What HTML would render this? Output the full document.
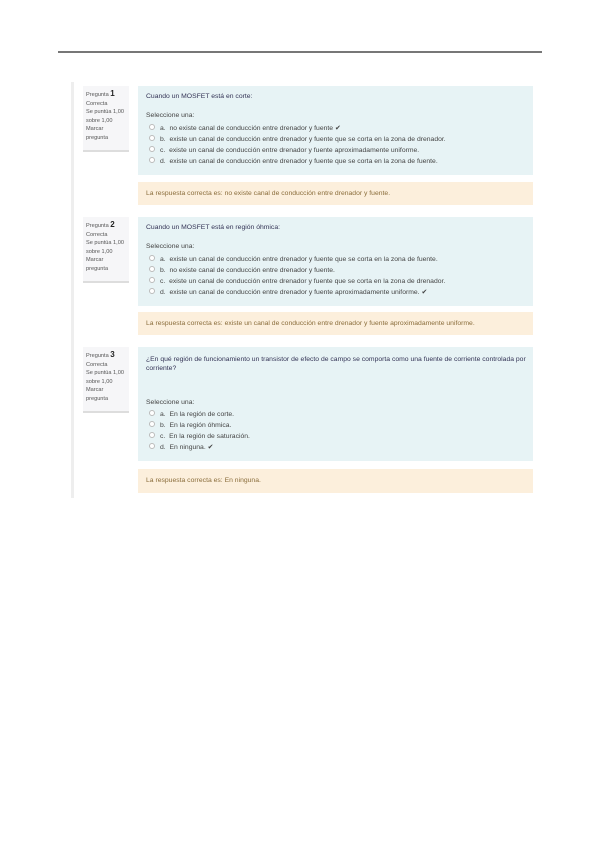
<!DOCTYPE html>
<html><head><meta charset="utf-8"><style>
body{margin:0;width:600px;height:848px;background:#fff;position:relative;font-family:"Liberation Sans",sans-serif;color:#444;overflow:hidden}
.a{position:absolute;white-space:nowrap;font-size:6.8px;line-height:8px}
.rule{position:absolute;left:58px;top:51px;width:484px;height:2px;background:#777}
.vl{position:absolute;left:71px;top:82px;width:3px;height:416px;background:#eee}
.info{position:absolute;left:83px;width:46px;background:#f6f6f8;border-bottom:2px solid #ddd}
.box{position:absolute;left:138px;width:395px;background:#e7f3f5}
.fb{position:absolute;left:138px;width:395px;background:#fcefdc}
.r{display:inline-block;width:4px;height:4px;border:1px solid #bbb;border-radius:50%;margin-right:5px;vertical-align:0px;background:#fff}
.in{font-size:5.6px;line-height:8.5px;color:#555;padding:4px 3px;white-space:normal}
</style></head><body>
<div class="rule"></div><div class="vl"></div>

<div class="info" style="top:86px;height:64px"><div class="in">Pregunta <b style="font-size:8px;color:#222">1</b><br>Correcta<br>Se puntúa 1,00 sobre 1,00<br>Marcar pregunta</div></div>
<div class="box" style="top:86px;height:89px"></div>
<div class="a" style="left:146px;top:93px;color:#335">Cuando un MOSFET está en corte:</div>
<div class="a" style="left:146px;top:112px">Seleccione una:</div>
<div class="a" style="left:149px;top:124px"><span class="r"></span>a. &nbsp;no existe canal de conducción entre drenador y fuente ✔</div>
<div class="a" style="left:149px;top:135px"><span class="r"></span>b. &nbsp;existe un canal de conducción entre drenador y fuente que se corta en la zona de drenador.</div>
<div class="a" style="left:149px;top:146px"><span class="r"></span>c. &nbsp;existe un canal de conducción entre drenador y fuente aproximadamente uniforme.</div>
<div class="a" style="left:149px;top:157px"><span class="r"></span>d. &nbsp;existe un canal de conducción entre drenador y fuente que se corta en la zona de fuente.</div>
<div class="fb" style="top:182px;height:23px"></div>
<div class="a" style="left:146px;top:190px;color:#8a6d3b">La respuesta correcta es: no existe canal de conducción entre drenador y fuente.</div>

<div class="info" style="top:217px;height:64px"><div class="in">Pregunta <b style="font-size:8px;color:#222">2</b><br>Correcta<br>Se puntúa 1,00 sobre 1,00<br>Marcar pregunta</div></div>
<div class="box" style="top:217px;height:89px"></div>
<div class="a" style="left:146px;top:224px;color:#335">Cuando un MOSFET está en región óhmica:</div>
<div class="a" style="left:146px;top:243px">Seleccione una:</div>
<div class="a" style="left:149px;top:255px"><span class="r"></span>a. &nbsp;existe un canal de conducción entre drenador y fuente que se corta en la zona de fuente.</div>
<div class="a" style="left:149px;top:266px"><span class="r"></span>b. &nbsp;no existe canal de conducción entre drenador y fuente.</div>
<div class="a" style="left:149px;top:277px"><span class="r"></span>c. &nbsp;existe un canal de conducción entre drenador y fuente que se corta en la zona de drenador.</div>
<div class="a" style="left:149px;top:288px"><span class="r"></span>d. &nbsp;existe un canal de conducción entre drenador y fuente aproximadamente uniforme. ✔</div>
<div class="fb" style="top:312px;height:23px"></div>
<div class="a" style="left:146px;top:320px;color:#8a6d3b">La respuesta correcta es: existe un canal de conducción entre drenador y fuente aproximadamente uniforme.</div>

<div class="info" style="top:347px;height:64px"><div class="in">Pregunta <b style="font-size:8px;color:#222">3</b><br>Correcta<br>Se puntúa 1,00 sobre 1,00<br>Marcar pregunta</div></div>
<div class="box" style="top:347px;height:114px"></div>
<div class="a" style="left:146px;top:355px;color:#335;line-height:9px">¿En qué región de funcionamiento un transistor de efecto de campo se comporta como una fuente de corriente controlada por<br>corriente?</div>
<div class="a" style="left:146px;top:399px">Seleccione una:</div>
<div class="a" style="left:149px;top:410px"><span class="r"></span>a. &nbsp;En la región de corte.</div>
<div class="a" style="left:149px;top:421px"><span class="r"></span>b. &nbsp;En la región óhmica.</div>
<div class="a" style="left:149px;top:432px"><span class="r"></span>c. &nbsp;En la región de saturación.</div>
<div class="a" style="left:149px;top:443px"><span class="r"></span>d. &nbsp;En ninguna. ✔</div>
<div class="fb" style="top:469px;height:24px"></div>
<div class="a" style="left:146px;top:477px;color:#8a6d3b">La respuesta correcta es: En ninguna.</div>
</body></html>
